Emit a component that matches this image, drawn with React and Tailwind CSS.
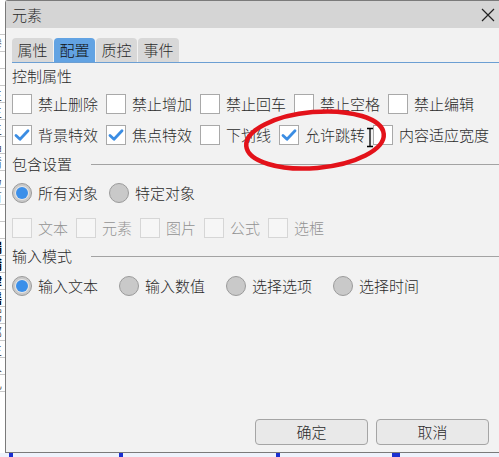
import React from "react";

function Check({ checked, disabled, label }) {
  return (
    <div className="flex items-center">
      <div
        className={
          "w-[20px] h-[20px] shrink-0 flex items-center justify-center border " +
          (disabled ? "border-[#d6d6d6] bg-[#f6f6f6]" : "border-[#a9a9a9] bg-white")
        }
      >
        {checked && (
          <svg width="18" height="18" viewBox="0 0 18 18">
            <path d="M3 9.5 L7 13.2 L15 4.8" fill="none" stroke="#3b8de3" strokeWidth="2.8" strokeLinecap="round" strokeLinejoin="round" />
          </svg>
        )}
      </div>
      <span className={"ml-[6px] whitespace-nowrap " + (disabled ? "text-[#929292]" : "text-[#2b2b2b]")}>{label}</span>
    </div>
  );
}

function Radio({ selected, label }) {
  return (
    <div className="flex items-center">
      <div className="w-[20px] h-[20px] shrink-0 rounded-full border border-[#9b9b9b] bg-[#c9c9c9] flex items-center justify-center">
        {selected && <div className="w-[12px] h-[12px] rounded-full bg-[#3b8fe9] ring-1 ring-[#e6e6e6]" />}
      </div>
      <span className="ml-[6px] whitespace-nowrap text-[#2b2b2b]">{label}</span>
    </div>
  );
}

function Section({ title }) {
  return (
    <div className="flex items-center h-[20px]">
      <span className="whitespace-nowrap text-[#2b2b2b]">{title}</span>
      <div className="flex-1 h-px bg-[#a3a3a3] ml-[19px]" />
    </div>
  );
}

const leftChars = ["", "黪", "", "", "主", "主", "主", "晶", "猜", "鸟", "苗", "", "", "漏", "鞴", "肆", "谣", "粥", "邸", "主", "入", "礼"];

export default function App() {
  return (
    <div className="relative w-[499px] h-[457px] overflow-hidden bg-white [font-family:'Noto_Sans_CJK_SC','Noto_Sans',sans-serif] font-light text-[15px] leading-[20px]">
      <div className="flex h-[453px]">
        {/* underlying document strip */}
        <div className="w-[5px] shrink-0 overflow-hidden bg-white">
          <div className="-ml-[11px] w-[16px] pt-[18px] flex flex-col">
            {leftChars.map((c, i) => (
              <div
                key={i}
                className={
                  "h-[17px] overflow-hidden leading-[16px] text-[13px] border-b border-[#c8c8c8] " +
                  (i > 12 && i < 17 ? "font-bold text-black" : "text-[#222]")
                }
              >
                {c}
              </div>
            ))}
          </div>
        </div>

        {/* dialog */}
        <div className="flex-1 flex flex-col bg-[#f2f2f2] border-l border-t border-b border-[#7a7a7a] rounded-tl-[3px]">
          <div className="h-[27px] shrink-0 bg-[#d5d5d5] flex items-center pl-[6px] pr-[4px]">
            <span className="text-[#2a2a2a]">元素</span>
            <div className="flex-1" />
            <svg width="14" height="14" viewBox="0 0 14 14">
              <path d="M1 1 L13 13 M13 1 L1 13" stroke="#222" strokeWidth="1.2" />
            </svg>
          </div>

          <div className="flex-1 flex flex-col pl-[6px]">
            {/* tabs */}
            <div className="flex gap-[1px] mt-[10px] h-[24px]">
              <div className="w-[41px] flex items-center justify-center rounded-t-[4px] bg-[#d8d8d8] text-[#2b2b2b]">属性</div>
              <div className="w-[41px] flex items-center justify-center rounded-t-[4px] bg-[#62a3e3] text-[#111]">配置</div>
              <div className="w-[41px] flex items-center justify-center rounded-t-[4px] bg-[#d8d8d8] text-[#2b2b2b]">质控</div>
              <div className="w-[41px] flex items-center justify-center rounded-t-[4px] bg-[#d8d8d8] text-[#2b2b2b]">事件</div>
            </div>
            <div className="h-px bg-[#6c9fd3]" />

            <div className="mt-[3px] h-[20px] text-[#2b2b2b]">控制属性</div>

            <div className="flex gap-[8px] mt-[8px]">
              <Check label="禁止删除" />
              <Check label="禁止增加" />
              <Check label="禁止回车" />
              <Check label="禁止空格" />
              <Check label="禁止编辑" />
            </div>
            <div className="flex gap-[8px] mt-[11px]">
              <Check checked label="背景特效" />
              <Check checked label="焦点特效" />
              <Check label="下划线" />
              <Check checked label="允许跳转" />
              <Check label="内容适应宽度" />
            </div>

            <div className="mt-[9px]">
              <Section title="包含设置" />
            </div>
            <div className="flex gap-[11px] mt-[9px]">
              <Radio selected label="所有对象" />
              <Radio label="特定对象" />
            </div>
            <div className="flex gap-[8px] mt-[15px]">
              <Check disabled label="文本" />
              <Check disabled label="元素" />
              <Check disabled label="图片" />
              <Check disabled label="公式" />
              <Check disabled label="选框" />
            </div>

            <div className="mt-[8px]">
              <Section title="输入模式" />
            </div>
            <div className="flex gap-[21px] mt-[10px]">
              <Radio selected label="输入文本" />
              <Radio label="输入数值" />
              <Radio label="选择选项" />
              <Radio label="选择时间" />
            </div>

            <div className="flex-1" />
            <div className="flex justify-end gap-[8px] pr-[10px] mb-[7px]">
              <button className="w-[113px] h-[26px] rounded-[4px] border border-[#a5a5a5] bg-[#e9e9e9] text-[#2b2b2b]">确定</button>
              <button className="w-[113px] h-[26px] rounded-[4px] border border-[#a5a5a5] bg-[#e9e9e9] text-[#2b2b2b]">取消</button>
            </div>
          </div>
        </div>
      </div>

      {/* document strip below dialog */}
      <div className="flex h-[4px] bg-[#eef2fb]">
        <div className="ml-[9px] w-[4px] bg-[#1a2fd0]" />
        <div className="ml-[106px] w-[4px] bg-[#1a2fd0]" />
        <div className="ml-[153px] w-[4px] bg-[#1a2fd0]" />
        <div className="ml-[112px] w-[8px] bg-[#1a2fd0]" />
      </div>

      {/* annotation overlay: red ellipse and text cursor */}
      <svg className="absolute left-0 top-0 pointer-events-none" width="499" height="457" viewBox="0 0 499 457">
        <ellipse cx="315" cy="140" rx="69" ry="28" transform="rotate(-5 315 140)" fill="none" stroke="#e3121a" strokeWidth="4.5" />
        <path d="M367 128.5 H373 M370 128.5 V146.5 M367 146.5 H373" stroke="#000" strokeWidth="1.3" fill="none" />
      </svg>
    </div>
  );
}
